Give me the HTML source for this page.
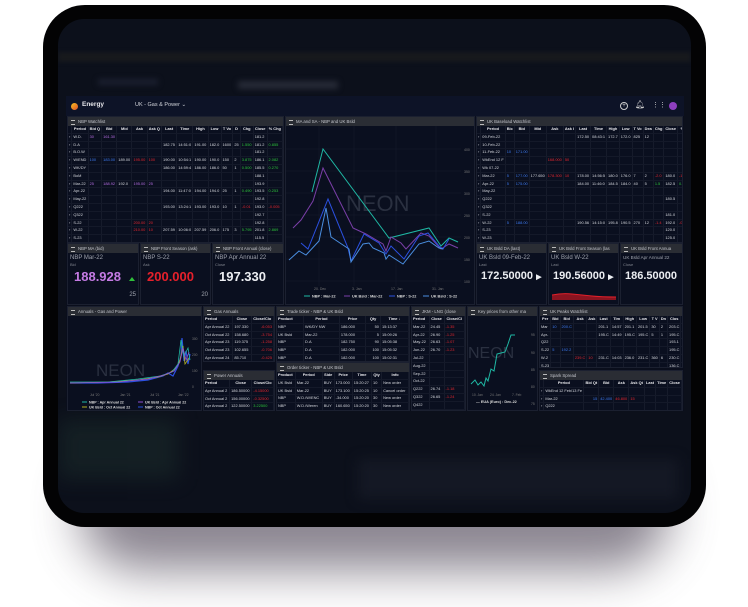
<!DOCTYPE html>
<html><head><meta charset="utf-8">
<style>
*{box-sizing:border-box;margin:0;padding:0}
body{width:748px;height:607px;background:#fff;position:relative;overflow:hidden;font-family:"Liberation Sans",sans-serif}
.shadow{position:absolute;left:80px;top:450px;width:590px;height:120px;border-radius:60px;background:#5a5262;filter:blur(24px);opacity:.7}
.bezel{position:absolute;left:43px;top:5px;width:663px;height:522px;border-radius:42px;background:#030304}
.screen{position:absolute;left:58px;top:19px;width:633px;height:494px;border-radius:26px;background:#0c101b;overflow:hidden}
.band{position:absolute;left:0;top:33px;width:633px;height:10px;background:#17191d;filter:blur(2px)}
.dash{position:absolute;left:66px;top:96px;width:618px;height:315px;background:#0a0e1c}
.hdr{position:absolute;left:0;top:0;width:618px;height:20px;background:#0d1327}
.p{position:absolute;background:#0a0f1f;border:1px solid #1b2030;overflow:hidden}
.t{height:9px;background:#2a2d34;color:#c4c6cc;font-size:4.3px;line-height:9px;padding-left:10px;position:relative;white-space:nowrap}
.t:before{content:"";position:absolute;left:3px;top:3px;width:4px;height:3px;border-top:1px solid #bbb;border-bottom:1px solid #bbb}
table{border-collapse:collapse;font-size:3.9px;color:#d6d8de;width:100%}
td,th{height:6.8px;line-height:6.8px;border-right:1px solid #161b2b;border-bottom:1px solid #141929;padding:0 1px;white-space:nowrap;overflow:hidden}
th{font-weight:bold;color:#e8e8ec;text-align:center}
.r{color:#e2262f}.g{color:#2dc23a}.b{color:#3d7af0}.pu{color:#b46ce0}
.lbl{position:absolute;font-size:6px;color:#9ea2ac;white-space:nowrap}
.sub{position:absolute;font-size:4px;color:#80848e}
.big{position:absolute;font-size:13px;font-weight:bold;white-space:nowrap}
.bs{font-size:11px}
</style></head><body>
<div class="shadow"></div>
<div class="bezel"></div>
<div class="screen"><div class="band"></div>
<div style="position:absolute;left:40px;top:60px;width:60px;height:6px;background:#1c2030;filter:blur(3px)"></div>
<div style="position:absolute;left:180px;top:62px;width:100px;height:8px;background:#262a36;filter:blur(3px)"></div>
<div style="position:absolute;left:0;top:400px;width:120px;height:60px;background:#1a2a2a;filter:blur(10px);opacity:.6"></div>
<div style="position:absolute;left:300px;top:440px;width:320px;height:40px;background:#141824;filter:blur(6px)"></div>
</div>

<div class="dash">
 <div class="hdr">
  <div style="position:absolute;left:5px;top:7px;width:7px;height:7px;border-radius:50%;background:linear-gradient(135deg,#f7c11e,#e0502a)"></div>
  <div style="position:absolute;left:16px;top:5px;font-size:6.5px;color:#e6e6ea;font-weight:bold">Energy</div>
  <div style="position:absolute;left:69px;top:6px;font-size:5.5px;color:#d0d2d8">UK - Gas &amp; Power ⌄</div>
  <div style="position:absolute;left:554px;top:6px;width:8px;height:8px;border:1px solid #ccc;border-radius:50%;font-size:6px;line-height:6px;color:#ccc;text-align:center">+</div>
  <div style="position:absolute;left:569px;top:5px;font-size:8px;color:#ccc;line-height:8px">🔔︎</div>
  <div style="position:absolute;left:586px;top:6px;font-size:7px;color:#ccc;line-height:8px">⋮⋮</div>
  <div style="position:absolute;left:603px;top:6px;width:8px;height:8px;border-radius:50%;background:#8e3fc0"></div>
 </div>

 <div class="p" style="left:1px;top:20px;width:217px;height:127px"><div class="t">NBP Watchlist</div>
 <table><tr><th></th><th>Period</th><th>Bid Q</th><th>Bid</th><th>Mid</th><th>Ask</th><th>Ask Q</th><th>Last</th><th>Time</th><th>High</th><th>Low</th><th>T Vo</th><th>D</th><th>Chg</th><th>Close</th><th>% Chg</th></tr>
 <tr><td>›</td><td>W.D.</td><td class="pu">30</td><td class="pu">161.30</td><td></td><td></td><td></td><td></td><td></td><td></td><td></td><td></td><td></td><td></td><td>181.2</td><td></td></tr>
 <tr><td>›</td><td>D.A</td><td></td><td></td><td></td><td></td><td></td><td>182.75</td><td>14:51:0</td><td>191.00</td><td>182.0</td><td>1600</td><td>25</td><td class="g">1.550</td><td>181.2</td><td class="g">0.855</td></tr>
 <tr><td>›</td><td>B.O.W</td><td></td><td></td><td></td><td></td><td></td><td></td><td></td><td></td><td></td><td></td><td></td><td></td><td>181.2</td><td></td></tr>
 <tr><td>›</td><td>W/END</td><td class="b">100</td><td class="b">183.00</td><td>189.00</td><td class="r">195.00</td><td class="r">100</td><td>190.00</td><td>10:54:1</td><td>190.00</td><td>190.0</td><td>150</td><td>2</td><td class="g">3.875</td><td>186.1</td><td class="g">2.082</td></tr>
 <tr><td>›</td><td>WK/DY</td><td></td><td></td><td></td><td></td><td></td><td>186.00</td><td>14:59:4</td><td>186.00</td><td>186.0</td><td>50</td><td>1</td><td class="g">0.500</td><td>185.5</td><td class="g">0.270</td></tr>
 <tr><td>›</td><td>BoM</td><td></td><td></td><td></td><td></td><td></td><td></td><td></td><td></td><td></td><td></td><td></td><td></td><td>188.1</td><td></td></tr>
 <tr><td>›</td><td>Mar-22</td><td class="pu">25</td><td class="pu">188.92</td><td>192.0</td><td class="pu">195.00</td><td class="pu">25</td><td></td><td></td><td></td><td></td><td></td><td></td><td></td><td>193.9</td><td></td></tr>
 <tr><td>›</td><td>Apr-22</td><td></td><td></td><td></td><td></td><td></td><td>194.00</td><td>11:47:0</td><td>194.00</td><td>194.0</td><td>25</td><td>1</td><td class="g">0.490</td><td>193.5</td><td class="g">0.253</td></tr>
 <tr><td>›</td><td>May-22</td><td></td><td></td><td></td><td></td><td></td><td></td><td></td><td></td><td></td><td></td><td></td><td></td><td>192.8</td><td></td></tr>
 <tr><td>›</td><td>Q222</td><td></td><td></td><td></td><td></td><td></td><td>193.00</td><td>13:24:1</td><td>193.00</td><td>193.0</td><td>10</td><td>1</td><td class="r">-0.01</td><td>193.0</td><td class="r">-0.005</td></tr>
 <tr><td>›</td><td>Q322</td><td></td><td></td><td></td><td></td><td></td><td></td><td></td><td></td><td></td><td></td><td></td><td></td><td>192.7</td><td></td></tr>
 <tr><td>›</td><td>S-22</td><td></td><td></td><td></td><td class="r">200.00</td><td class="r">20</td><td></td><td></td><td></td><td></td><td></td><td></td><td></td><td>192.8</td><td></td></tr>
 <tr><td>›</td><td>W-22</td><td></td><td></td><td></td><td class="r">210.00</td><td class="r">10</td><td>207.59</td><td>10:06:0</td><td>207.59</td><td>206.0</td><td>175</td><td>3</td><td class="g">5.795</td><td>201.8</td><td class="g">2.869</td></tr>
 <tr><td>›</td><td>S-23</td><td></td><td></td><td></td><td></td><td></td><td></td><td></td><td></td><td></td><td></td><td></td><td></td><td>115.5</td><td></td></tr>
 <tr><td>›</td><td>W-23</td><td></td><td></td><td></td><td></td><td></td><td></td><td></td><td></td><td></td><td></td><td></td><td></td><td>123.1</td><td></td></tr>
 <tr><td>›</td><td>S-24</td><td></td><td></td><td></td><td></td><td></td><td></td><td></td><td></td><td></td><td></td><td></td><td></td><td>82.12</td><td></td></tr>
 </table></div>

 <div class="p" style="left:1px;top:147px;width:72px;height:62px"><div class="t">NBP MA (bid)</div>
  <div class="lbl" style="left:2px;top:11px">NBP Mar-22</div><div class="sub" style="left:2px;top:18px">Bid</div>
  <div class="big" style="left:6px;top:25px;color:#c57be4">188.928</div><div style="position:absolute;left:61px;top:30px;width:0;height:0;border:3px solid transparent;border-bottom:4px solid #2fbf3a"></div>
  <div class="lbl" style="right:2px;top:48px">25</div></div>
 <div class="p" style="left:74px;top:147px;width:71px;height:62px"><div class="t">NBP Front Season (ask)</div>
  <div class="lbl" style="left:2px;top:11px">NBP S-22</div><div class="sub" style="left:2px;top:18px">Ask</div>
  <div class="big" style="left:6px;top:25px;color:#e6202b">200.000</div>
  <div class="lbl" style="right:2px;top:48px">20</div></div>
 <div class="p" style="left:146px;top:147px;width:72px;height:62px"><div class="t">NBP Front Annual (close)</div>
  <div class="lbl" style="left:2px;top:11px">NBP Apr Annual 22</div><div class="sub" style="left:2px;top:18px">Close</div>
  <div class="big" style="left:6px;top:25px;color:#eceef2">197.330</div></div>

 <div class="p" style="left:219px;top:20px;width:190px;height:189px"><div class="t">MA and SA - NBP and UK Bsld</div>
 <svg width="190" height="180" style="position:absolute;left:0;top:4px" font-family="Liberation Sans" font-size="3.5" fill="#777">
  <g stroke="#171d2e" stroke-width=".5"><line x1="0" y1="28" x2="175" y2="28"/><line x1="0" y1="50" x2="175" y2="50"/><line x1="0" y1="72" x2="175" y2="72"/><line x1="0" y1="94" x2="175" y2="94"/><line x1="0" y1="116" x2="175" y2="116"/><line x1="0" y1="138" x2="175" y2="138"/><line x1="0" y1="160" x2="175" y2="160"/><line x1="33" y1="5" x2="33" y2="165"/><line x1="68" y1="5" x2="68" y2="165"/><line x1="110" y1="5" x2="110" y2="165"/><line x1="150" y1="5" x2="150" y2="165"/></g>
  <text x="60" y="90" font-size="22" fill="#2a3040">NEON</text>
  <text x="178" y="30">400</text><text x="178" y="52">350</text><text x="178" y="74">300</text><text x="178" y="96">250</text><text x="178" y="118">200</text><text x="178" y="140">150</text><text x="178" y="162">100</text>
  <text x="28" y="169">20. Dec</text><text x="66" y="169">3. Jan</text><text x="105" y="169">17. Jan</text><text x="146" y="169">31. Jan</text>
  <polyline fill="none" stroke="#1fb8a4" stroke-width="1" points="26,71 37,28 103,117 143,107 155,125 163,117 172,121"/>
  <polyline fill="none" stroke="#7a3fa8" stroke-width="1" points="7,107 15,99 27,80 37,47 67,107 80,113 97,123 100,130 105,116 115,122 120,128 135,112 143,115 155,128 163,123 172,127"/>
  <polyline fill="none" stroke="#2b50e0" stroke-width="1" points="15,122 22,128 42,78 62,127 65,140 78,113 93,122 100,133 105,125 118,138 133,115 142,112 153,125 157,128 163,118"/>
  <polyline fill="none" stroke="#4a8ee0" stroke-width="1" points="3,139 13,130 20,134 33,120 40,87 45,116 63,128 65,141 77,123 83,122 87,127 98,132 100,138 103,134 117,143 133,123 143,120 153,127 157,128"/>
  <g font-size="3.8" fill="#ddd" font-weight="bold"><line x1="18" y1="175" x2="24" y2="175" stroke="#1fb8a4"/><text x="26" y="176.5">NBP : Mar-22</text><line x1="58" y1="175" x2="64" y2="175" stroke="#7a3fa8"/><text x="66" y="176.5">UK Bsld : Mar-22</text><line x1="103" y1="175" x2="109" y2="175" stroke="#2b50e0"/><text x="111" y="176.5">NBP : S-22</text><line x1="137" y1="175" x2="143" y2="175" stroke="#4a8ee0"/><text x="145" y="176.5">UK Bsld : S-22</text></g>
 </svg></div>

 <div class="p" style="left:410px;top:20px;width:207px;height:127px"><div class="t">UK Baseload Watchlist</div>
 <table><tr><th></th><th>Period</th><th>Bic</th><th>Bid</th><th>Mid</th><th>Ask</th><th>Ask I</th><th>Last</th><th>Time</th><th>High</th><th>Low</th><th>T Vo</th><th>Dea</th><th>Chg</th><th>Close</th><th>%</th></tr>
 <tr><td>›</td><td>09-Feb-22</td><td></td><td></td><td></td><td></td><td></td><td>172.50</td><td>08:43:1</td><td>172.7</td><td>172.0</td><td>825</td><td>12</td><td></td><td></td><td></td></tr>
 <tr><td>›</td><td>10-Feb-22</td><td></td><td></td><td></td><td></td><td></td><td></td><td></td><td></td><td></td><td></td><td></td><td></td><td></td><td></td></tr>
 <tr><td>›</td><td>11-Feb-22</td><td class="b">10</td><td class="b">171.00</td><td></td><td></td><td></td><td></td><td></td><td></td><td></td><td></td><td></td><td></td><td></td><td></td></tr>
 <tr><td>›</td><td>WkEnd 12 F</td><td></td><td></td><td></td><td class="r">168.000</td><td class="r">50</td><td></td><td></td><td></td><td></td><td></td><td></td><td></td><td></td><td></td></tr>
 <tr><td>›</td><td>Wk 07-22</td><td></td><td></td><td></td><td></td><td></td><td></td><td></td><td></td><td></td><td></td><td></td><td></td><td></td><td></td></tr>
 <tr><td>›</td><td>Mar-22</td><td class="b">5</td><td class="b">177.00</td><td>177.650</td><td class="r">178.300</td><td class="r">10</td><td>178.00</td><td>14:56:5</td><td>180.0</td><td>176.0</td><td>7</td><td>2</td><td class="r">-2.0</td><td>180.0</td><td class="r">-1.1</td></tr>
 <tr><td>›</td><td>Apr-22</td><td class="b">5</td><td class="b">175.00</td><td></td><td></td><td></td><td>184.00</td><td>11:46:0</td><td>184.5</td><td>184.0</td><td>40</td><td>5</td><td class="g">1.5</td><td>182.5</td><td class="g">0.8</td></tr>
 <tr><td>›</td><td>May-22</td><td></td><td></td><td></td><td></td><td></td><td></td><td></td><td></td><td></td><td></td><td></td><td></td><td></td><td></td></tr>
 <tr><td>›</td><td>Q222</td><td></td><td></td><td></td><td></td><td></td><td></td><td></td><td></td><td></td><td></td><td></td><td></td><td>180.5</td><td></td></tr>
 <tr><td>›</td><td>Q322</td><td></td><td></td><td></td><td></td><td></td><td></td><td></td><td></td><td></td><td></td><td></td><td></td><td></td><td></td></tr>
 <tr><td>›</td><td>S-22</td><td></td><td></td><td></td><td></td><td></td><td></td><td></td><td></td><td></td><td></td><td></td><td></td><td>181.0</td><td></td></tr>
 <tr><td>›</td><td>W-22</td><td class="b">5</td><td class="b">188.00</td><td></td><td></td><td></td><td>190.56</td><td>14:15:0</td><td>195.8</td><td>190.5</td><td>270</td><td>12</td><td class="r">-1.4</td><td>192.0</td><td class="r">-0.7</td></tr>
 <tr><td>›</td><td>S-23</td><td></td><td></td><td></td><td></td><td></td><td></td><td></td><td></td><td></td><td></td><td></td><td></td><td>120.0</td><td></td></tr>
 <tr><td>›</td><td>W-23</td><td></td><td></td><td></td><td></td><td></td><td></td><td></td><td></td><td></td><td></td><td></td><td></td><td>125.0</td><td></td></tr>
 <tr><td>›</td><td>S-24</td><td></td><td></td><td></td><td></td><td></td><td></td><td></td><td></td><td></td><td></td><td></td><td></td><td></td><td></td></tr>
 </table></div>

 <div class="p" style="left:410px;top:147px;width:71px;height:62px"><div class="t">UK Bsld DA (last)</div>
  <div class="lbl" style="left:2px;top:11px">UK Bsld 09-Feb-22</div><div class="sub" style="left:2px;top:18px">Last</div>
  <div class="big bs" style="left:4px;top:26px;color:#eceef2">172.50000 <span style="font-size:7px">▶</span></div></div>
 <div class="p" style="left:482px;top:147px;width:71px;height:62px"><div class="t">UK Bsld Front Season (las</div>
  <div class="lbl" style="left:2px;top:11px">UK Bsld W-22</div><div class="sub" style="left:2px;top:18px">Last</div>
  <div class="big bs" style="left:4px;top:26px;color:#eceef2">190.56000 <span style="font-size:7px">▶</span></div>
  <svg style="position:absolute;left:3px;top:48px" width="64" height="8"><path d="M0,3 Q10,1 20,2 T40,4 T64,5 L64,8 L0,8Z" fill="#8a1420"/><path d="M0,3 Q10,1 20,2 T40,4 T64,5" fill="none" stroke="#e0202a" stroke-width="1"/></svg></div>
 <div class="p" style="left:554px;top:147px;width:63px;height:62px"><div class="t">UK Bsld Front Annua</div>
  <div class="lbl" style="left:2px;top:11px;font-size:4.6px">UK Bsld Apr Annual 22</div><div class="sub" style="left:2px;top:18px">Close</div>
  <div class="big bs" style="left:4px;top:26px;color:#eceef2">186.50000</div></div>

 <div class="p" style="left:1px;top:210px;width:135px;height:105px"><div class="t">Annuals - Gas and Power</div>
 <svg width="135" height="96" style="position:absolute;left:0;top:9px" font-family="Liberation Sans" font-size="3.3" fill="#777">
  <text x="28" y="60" font-size="17" fill="#2a3040">NEON</text>
  <text x="124" y="24">300</text><text x="124" y="40">200</text><text x="124" y="56">100</text><text x="124" y="72">0</text>
  <text x="22" y="80">Jul '20</text><text x="52" y="80">Jan '21</text><text x="82" y="80">Jul '21</text><text x="110" y="80">Jan '22</text>
  <polyline fill="none" stroke="#2b50e0" stroke-width="1.2" points="2,67 30,67 60,66 80,64 95,60 100,57 105,60 110,50 113,40 114,22 116,45 118,35 120,48 122,38"/>
  <polyline fill="none" stroke="#b3b020" stroke-width=".8" points="2,67 40,66 70,64 90,61 100,58 108,52 112,44 115,30 117,48 121,42"/>
  <polyline fill="none" stroke="#1fb8a4" stroke-width=".8" points="2,66 40,66 70,63 92,60 104,56 110,48 113,24 116,40 120,32 122,44"/>
  <polyline fill="none" stroke="#8f4fd0" stroke-width=".8" points="2,67 50,66 80,63 96,59 106,55 112,46 115,32 118,44 121,36"/>
  <g font-size="3.6" fill="#ddd" font-weight="bold"><line x1="14" y1="86" x2="19" y2="86" stroke="#1fb8a4"/><text x="21" y="87.5">NBP : Apr Annual 22</text><line x1="70" y1="86" x2="75" y2="86" stroke="#8f4fd0"/><text x="77" y="87.5">UK Bsld : Apr Annual 22</text><line x1="14" y1="91" x2="19" y2="91" stroke="#b3b020"/><text x="21" y="92.5">UK Bsld : Oct Annual 22</text><line x1="70" y1="91" x2="75" y2="91" stroke="#2b50e0"/><text x="77" y="92.5">NBP : Oct Annual 22</text></g>
 </svg></div>

 <div class="p" style="left:137px;top:210px;width:72px;height:56px"><div class="t">Gas Annuals</div>
 <table><tr><th style="text-align:left">Period</th><th>Close</th><th>Close/Clo</th></tr>
 <tr><td>Apr Annual 22</td><td>197.330</td><td class="r" style="text-align:right">-6.053</td></tr>
 <tr><td>Oct Annual 22</td><td>158.680</td><td class="r" style="text-align:right">-3.754</td></tr>
 <tr><td>Apr Annual 23</td><td>119.375</td><td class="r" style="text-align:right">-1.258</td></tr>
 <tr><td>Oct Annual 23</td><td>102.655</td><td class="r" style="text-align:right">-0.706</td></tr>
 <tr><td>Apr Annual 24</td><td>85.710</td><td class="r" style="text-align:right">-0.425</td></tr>
 <tr><td>Oct Annual 24</td><td>79.530</td><td class="r" style="text-align:right">-0.172</td></tr>
 </table></div>
 <div class="p" style="left:137px;top:274px;width:72px;height:41px"><div class="t">Power Annuals</div>
 <table><tr><th style="text-align:left">Period</th><th>Close</th><th>Close/Clo</th></tr>
 <tr><td>Apr Annual 2</td><td>186.50000</td><td class="r">-4.15000</td></tr>
 <tr><td>Oct Annual 2</td><td>156.00000</td><td class="r">-0.32500</td></tr>
 <tr><td>Apr Annual 2</td><td>122.50000</td><td class="g">3.22500</td></tr>
 </table></div>

 <div class="p" style="left:210px;top:210px;width:134px;height:56px"><div class="t">Trade ticker - NBP &amp; UK Bsld</div>
 <table><tr><th style="text-align:left">Product</th><th>Period</th><th>Price</th><th>Qty</th><th>Time ↓</th></tr>
 <tr><td>NBP</td><td>WK/DY NW</td><td>186.000</td><td style="text-align:right">50</td><td>15:13:37</td></tr>
 <tr><td>UK Bsld</td><td>Mar-22</td><td>178.000</td><td style="text-align:right">5</td><td>15:09:26</td></tr>
 <tr><td>NBP</td><td>D.A</td><td>182.750</td><td style="text-align:right">90</td><td>15:05:38</td></tr>
 <tr><td>NBP</td><td>D.A</td><td>182.000</td><td style="text-align:right">100</td><td>15:05:32</td></tr>
 <tr><td>NBP</td><td>D.A</td><td>182.000</td><td style="text-align:right">100</td><td>15:02:31</td></tr>
 </table></div>
 <div class="p" style="left:210px;top:266px;width:134px;height:49px"><div class="t">Order ticker - NBP &amp; UK Bsld</div>
 <table><tr><th style="text-align:left">Product</th><th>Period</th><th>Side</th><th>Price</th><th>Time</th><th>Qty</th><th>Info</th></tr>
 <tr><td>UK Bsld</td><td>Mar-22</td><td>BUY</td><td>173.000</td><td>15:20:27</td><td>10</td><td>New order</td></tr>
 <tr><td>UK Bsld</td><td>Mar-22</td><td>BUY</td><td>173.100</td><td>15:20:25</td><td>10</td><td>Cancel order</td></tr>
 <tr><td>NBP</td><td>W.D./W/ENC</td><td>BUY</td><td>-34.000</td><td>15:20:20</td><td>30</td><td>New order</td></tr>
 <tr><td>NBP</td><td>W.D./Weren</td><td>BUY</td><td>160.650</td><td>15:20:20</td><td>30</td><td>New order</td></tr>
 <tr><td>NBP</td><td>W.D.</td><td>BUY</td><td>161.000</td><td>15:20:20</td><td>30</td><td>New order</td></tr>
 </table></div>

 <div class="p" style="left:345px;top:210px;width:55px;height:105px"><div class="t">JKM - LNG (close</div>
 <table><tr><th style="text-align:left">Period</th><th>Close</th><th>Close/Cl</th></tr>
 <tr><td>Mar-22</td><td>24.45</td><td class="r">-1.35</td></tr><tr><td>Apr-22</td><td>26.90</td><td class="r">-1.25</td></tr>
 <tr><td>May-22</td><td>26.63</td><td class="r">-1.07</td></tr><tr><td>Jun-22</td><td>26.70</td><td class="r">-1.23</td></tr>
 <tr><td>Jul-22</td><td></td><td></td></tr><tr><td>Aug-22</td><td></td><td></td></tr><tr><td>Sep-22</td><td></td><td></td></tr><tr><td>Oct-22</td><td></td><td></td></tr>
 <tr><td>Q222</td><td>26.74</td><td class="r">-1.18</td></tr><tr><td>Q322</td><td>26.65</td><td class="r">-1.24</td></tr>
 <tr><td>Q422</td><td></td><td></td></tr><tr><td>Q123</td><td></td><td></td></tr><tr><td>S-22</td><td>26.70</td><td class="r">-1.21</td></tr>
 </table></div>

 <div class="p" style="left:401px;top:210px;width:71px;height:105px"><div class="t">Key prices from other ma</div>
 <svg width="71" height="96" style="position:absolute;left:0;top:9px" font-family="Liberation Sans" font-size="3.3" fill="#777">
  <text x="0" y="42" font-size="16" fill="#2a3040">NEON</text>
  <text x="63" y="20">95</text><text x="63" y="38">90</text><text x="63" y="55">85</text><text x="63" y="72">80</text><text x="63" y="89">75</text>
  <text x="4" y="80">10. Jan</text><text x="22" y="80">24. Jan</text><text x="44" y="80">7. Feb</text>
  <polyline fill="none" stroke="#1fb8a4" stroke-width="1" points="3,68 7,64 10,69 13,66 16,70 18,62 20,65 23,53 26,55 29,38 33,37 37,36 40,28 43,19 47,19"/>
 </svg>
 <div style="position:absolute;left:8px;top:93px;font-size:3.8px;color:#ddd;font-weight:bold">— EUA (Euro) : Dec-22</div></div>

 <div class="p" style="left:473px;top:210px;width:144px;height:62px"><div class="t">UK Peaks Watchlist</div>
 <table><tr><th>Per</th><th>Bid</th><th>Bid</th><th>Ask</th><th>Ask</th><th>Last</th><th>Tim</th><th>High</th><th>Low</th><th>T V</th><th>Dn</th><th>Clos</th><th>Chg</th></tr>
 <tr><td>Mar</td><td class="b">10</td><td class="b">200.C</td><td></td><td></td><td>201.1</td><td>14:57</td><td>201.1</td><td>201.5</td><td>30</td><td>2</td><td>203.C</td><td class="r">-1.50</td></tr>
 <tr><td>Apr-</td><td></td><td></td><td></td><td></td><td>195.C</td><td>14:49</td><td>195.C</td><td>195.C</td><td>5</td><td>1</td><td>195.C</td><td>0.000</td></tr>
 <tr><td>Q22</td><td></td><td></td><td></td><td></td><td></td><td></td><td></td><td></td><td></td><td></td><td>193.1</td><td></td></tr>
 <tr><td>S-22</td><td class="b">5</td><td class="b">192.2</td><td></td><td></td><td></td><td></td><td></td><td></td><td></td><td></td><td>195.C</td><td></td></tr>
 <tr><td>W-2</td><td></td><td></td><td class="r">239.C</td><td class="r">10</td><td>231.C</td><td>14:03</td><td>236.0</td><td>231.C</td><td>360</td><td>6</td><td>230.C</td><td class="g">1.00</td></tr>
 <tr><td>S-23</td><td></td><td></td><td></td><td></td><td></td><td></td><td></td><td></td><td></td><td></td><td>136.C</td><td></td></tr>
 </table></div>
 <div class="p" style="left:473px;top:274px;width:144px;height:41px"><div class="t">Spark Spread</div>
 <table><tr><th></th><th>Period</th><th>Bid Qt</th><th>Bid</th><th>Ask</th><th>Ask Qt</th><th>Last</th><th>Time</th><th>Close</th></tr>
 <tr><td>›</td><td>WkEnd 12 Feb/13 Fe</td><td></td><td></td><td></td><td></td><td></td><td></td><td></td></tr>
 <tr><td>›</td><td>Mar-22</td><td class="b" style="text-align:right">15</td><td class="b">42.400</td><td class="r">46.800</td><td class="r">15</td><td></td><td></td><td></td></tr>
 <tr><td>›</td><td>Q222</td><td></td><td></td><td></td><td></td><td></td><td></td><td></td></tr>
 </table></div>
</div>
</body></html>
